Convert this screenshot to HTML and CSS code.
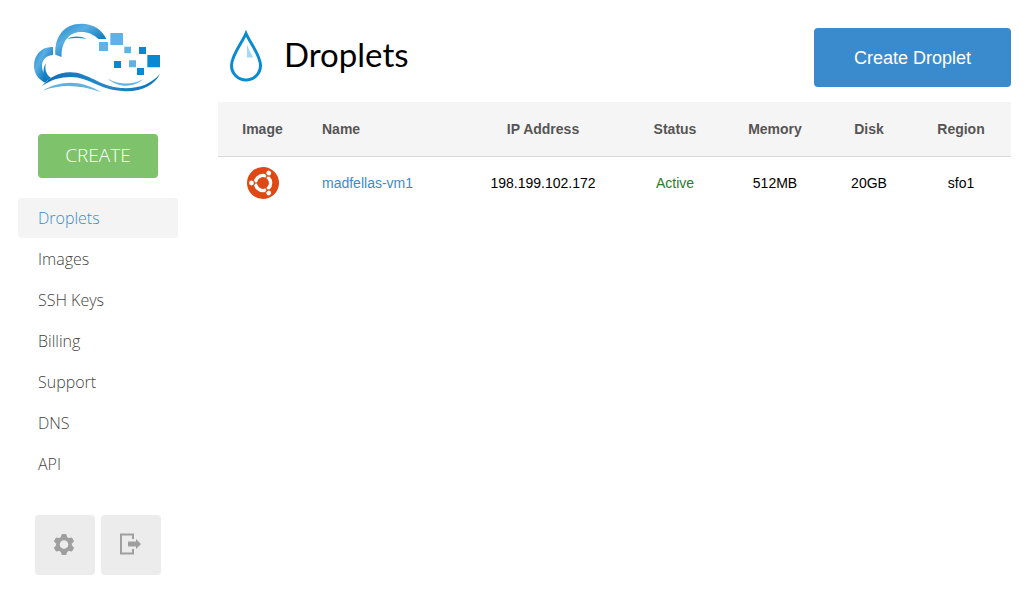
FILE: index.html
```html
<!DOCTYPE html>
<html lang="en">
<head>
<meta charset="utf-8">
<title>Droplets</title>
<link rel="stylesheet" href="styles.css">
</head>
<body>
<div class="layout">
  <aside class="sidebar">
    <a class="logo" href="#" aria-label="Home">
      <svg width="127" height="70" viewBox="27 24 381 210" aria-hidden="true">
        <defs>
          <linearGradient id="sky" x1="0" y1="0" x2="1" y2="1">
            <stop offset="0" stop-color="#1b86cb"/>
            <stop offset=".35" stop-color="#5aaee2"/>
            <stop offset=".7" stop-color="#0f7cc3"/>
            <stop offset="1" stop-color="#0572bb"/>
          </linearGradient>
          <linearGradient id="sea">
            <stop offset="0" stop-color="#0b6db4"/>
            <stop offset=".5" stop-color="#2389ca"/>
            <stop offset="1" stop-color="#0a74bc"/>
          </linearGradient>
        </defs>
        <path fill="url(#sky)" d="M91 119C88 65 117 26 170 26c36 0 62 19 74 46h-24c-13-13-31-21-51-21-38 0-61 31-59 75z"/>
        <path fill="#2389ca" d="M125 72c18-10 43-10 60 0-20-4-40-4-60 0z"/>
        <path fill="url(#sky)" d="M84 96c-37-2-57 27-57 56 0 22 12 40 33 51l16-15c-17-6-26-20-25-38 1-17 14-29 33-30z"/>
        <path fill="#1680c5" d="M63 145c-5 17 0 33 15 44l-9 7c-16-16-17-36-6-51z"/>
        <path fill="url(#sea)" d="M51 213c25-28 51-40 82-41 53-2 91 43 155 47 50 3 91-11 117-43-17 36-57 56-114 52-68-4-101-42-153-42-32 0-59 8-87 27z"/>
        <path fill="#60b2e5" d="M53 227c54-31 113-33 176 5-66-23-119-25-176-5zM249 191c35 19 72 20 106 1-30 28-77 26-106-1z"/>
        <g fill="#60b2e5"><path d="M256 54h38v36h-38zM222 81h27v27h-27zM298 95h20v20h-20zM312 136h21v21h-21z"/></g>
        <g fill="#0788d1"><path d="M342 96h21v21h-21zM267 138h21v21h-21zM367 120h38v37h-38zM336 159h21v21h-21z"/></g>
      </svg>
    </a>
    <button class="create" type="button">CREATE</button>
    <nav class="nav" aria-label="Main">
      <a class="nav-link active" href="#">Droplets</a>
      <a class="nav-link" href="#">Images</a>
      <a class="nav-link" href="#">SSH Keys</a>
      <a class="nav-link" href="#">Billing</a>
      <a class="nav-link" href="#">Support</a>
      <a class="nav-link" href="#">DNS</a>
      <a class="nav-link" href="#">API</a>
    </nav>
    <div class="tools">
      <button class="tool" type="button" aria-label="Settings">
        <svg width="20" height="21" viewBox="-10 -10.5 20 21" aria-hidden="true">
          <g fill="#9f9f9f">
            <path fill-rule="evenodd" d="M0-8a8 8 0 1 0 0 16a8 8 0 1 0 0-16zM0-4.3a4.3 4.3 0 1 1 0 8.6a4.3 4.3 0 1 1 0-8.6z"/>
            <path id="tooth" d="M-3.3-7l.8-2.7q.3-.7 1-.7h3q.7 0 1 .7l.8 2.7z"/>
            <use href="#tooth" transform="rotate(60)"/>
            <use href="#tooth" transform="rotate(120)"/>
            <use href="#tooth" transform="rotate(180)"/>
            <use href="#tooth" transform="rotate(240)"/>
            <use href="#tooth" transform="rotate(300)"/>
          </g>
        </svg>
      </button>
      <button class="tool" type="button" aria-label="Log out">
        <svg width="21" height="22" viewBox="0 0 21 22" aria-hidden="true">
          <path fill="none" stroke="#9f9f9f" stroke-width="2" d="M13 6V1.500H1v19h12V16"/>
          <path fill="#9f9f9f" d="M8 8.500h8V6l5 5-5 5v-2.500H8z"/>
        </svg>
      </button>
    </div>
  </aside>
  <main class="main">
    <header class="header">
      <svg class="drop" width="34" height="52" viewBox="0 0 34 52" aria-hidden="true">
        <path fill="none" stroke="#0a8bd1" stroke-width="3" stroke-miterlimit="10" d="M17 3.500C13 13 2.500 25 2.500 35.500a14.500 14.500 0 0 0 29 0C31.500 25 21 13 17 3.500z"/>
        <path fill="#a5d8f2" d="M18 14.500c1 4 4 8 6 13h-6z"/>
      </svg>
      <h1 class="title">Droplets</h1>
      <button class="create-droplet" type="button">Create Droplet</button>
    </header>
    <table class="droplets">
      <colgroup>
        <col class="col-image"><col><col class="col-ip"><col class="col-status"><col class="col-memory"><col class="col-disk"><col class="col-region">
      </colgroup>
      <thead>
        <tr><th>Image</th><th class="name">Name</th><th>IP Address</th><th>Status</th><th>Memory</th><th>Disk</th><th>Region</th></tr>
      </thead>
      <tbody>
        <tr>
          <td>
            <svg class="distro" width="32" height="32" viewBox="-16 -16 32 32" role="img" aria-label="Ubuntu">
              <circle r="16" fill="#dd4814"/>
              <circle r="7.500" fill="none" stroke="#fff" stroke-width="3.600"/>
              <g id="friend">
                <path stroke="#dd4814" stroke-width="1.200" d="M0 0H-12"/>
                <circle cx="-11.500" r="3" fill="#fff" stroke="#dd4814" stroke-width="1.200"/>
              </g>
              <use href="#friend" transform="rotate(120)"/>
              <use href="#friend" transform="rotate(240)"/>
              <circle r="5.700" fill="#dd4814"/>
            </svg>
          </td>
          <td class="name"><a href="#">madfellas-vm1</a></td>
          <td>198.199.102.172</td>
          <td class="status">Active</td>
          <td>512MB</td>
          <td>20GB</td>
          <td>sfo1</td>
        </tr>
      </tbody>
    </table>
  </main>
</div>
</body>
</html>
```
FILE: styles.css
```css
* {
  box-sizing: border-box;
}

body {
  margin: 0;
  background: #fff;
  color: #000;
  font: 14px/20px "Liberation Sans", Arial, sans-serif;
}

a {
  color: #3a8bcd;
  text-decoration: none;
}

button {
  border: 0;
  padding: 0;
  cursor: pointer;
}

svg {
  display: block;
}

.layout {
  display: flex;
  gap: 40px;
  padding: 23px 24px 24px 18px;
}

.sidebar {
  flex: 0 0 160px;
  display: flex;
  flex-direction: column;
}

.logo {
  margin-left: 16px;
}

.create {
  width: 120px;
  height: 44px;
  margin: 41px 20px 20px;
  padding-bottom: 2px;
  border-radius: 4px;
  background: #7ec36c;
  color: #fff;
  font: 300 19px/24px "Open Sans", sans-serif;
}

.nav {
  display: flex;
  flex-direction: column;
  gap: 1px;
}

.nav-link {
  padding: 8px 20px;
  border-radius: 4px;
  color: #444;
  font: 300 16px/24px "Open Sans", sans-serif;
}

.nav-link.active {
  background: #f4f4f4;
  color: #3a8bcd;
}

.tools {
  display: flex;
  justify-content: center;
  gap: 6px;
  margin-top: 31px;
}

.tool {
  display: flex;
  align-items: center;
  justify-content: center;
  width: 60px;
  height: 60px;
  padding: 0 2px 2px 0;
  border-radius: 4px;
  background: #ececec;
}

.main {
  flex: 1;
  min-width: 0;
  padding-top: 5px;
}

.header {
  display: flex;
  align-items: flex-start;
  gap: 21px;
  padding-left: 11px;
  margin-bottom: 15px;
}

.drop {
  margin-top: 2px;
}

.title {
  flex: 1;
  margin: 0;
  padding-top: 2px;
  font: 400 33px/48px Lato, sans-serif;
}

.create-droplet {
  padding: 19px 40px 17px;
  border-radius: 4px;
  background: #3a8bcd;
  color: #fff;
  font: 18px/23px "Liberation Sans", Arial, sans-serif;
}

.droplets {
  width: 100%;
  table-layout: fixed;
  border-collapse: collapse;
  text-align: center;
}

.droplets th {
  height: 54px;
  padding: 0;
  border-bottom: 1px solid #d9d9d9;
  background: #f5f5f5;
  color: #555;
}

.droplets td {
  height: 54px;
  padding: 0;
}

.droplets .name {
  padding-left: 15px;
  text-align: left;
}

.droplets .status {
  color: #2c7a2c;
}

.distro {
  margin: 0 auto;
}

.col-image {
  width: 89px;
}

.col-ip {
  width: 168px;
}

.col-status {
  width: 96px;
}

.col-memory {
  width: 104px;
}

.col-disk {
  width: 84px;
}

.col-region {
  width: 100px;
}
```
